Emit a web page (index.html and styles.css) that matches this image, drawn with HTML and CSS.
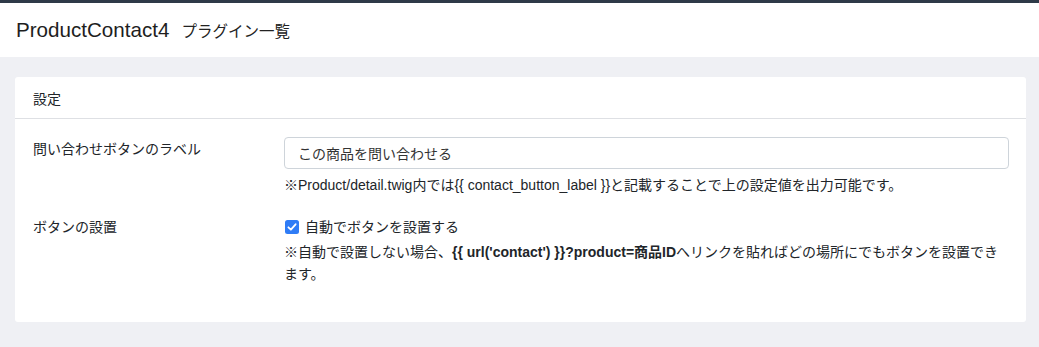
FILE: index.html
```html
<!DOCTYPE html>
<html lang="ja">
<head>
<meta charset="utf-8">
<link rel="stylesheet" href="styles.css">
</head>
<body>
<div class="topbar"></div>
<header class="header">
  <h1 class="title">ProductContact4</h1>
  <span class="subtitle">プラグイン一覧</span>
</header>
<main class="main">
  <section class="card">
    <div class="card-header">設定</div>
    <div class="card-body">
      <div class="row">
        <div class="label">問い合わせボタンのラベル</div>
        <div class="field">
          <input class="input" type="text" value="この商品を問い合わせる">
          <p class="help">※Product/detail.twig内では{{ contact_button_label }}と記載することで上の設定値を出力可能です。</p>
        </div>
      </div>
      <div class="row">
        <div class="label">ボタンの設置</div>
        <div class="field">
          <label class="check"><span class="box"><svg viewBox="0 0 14 14" width="14" height="14"><rect width="14" height="14" rx="2.5" fill="#2f7cf6"/><path d="M3.4 7.3 L5.9 9.7 L10.6 4.3" fill="none" stroke="#fff" stroke-width="1.8" stroke-linecap="round" stroke-linejoin="round"/></svg></span>自動でボタンを設置する</label>
          <p class="help help2">※自動で設置しない場合、<b>{{ url('contact') }}?product=商品ID</b>へリンクを貼ればどの場所にでもボタンを設置できます。</p>
        </div>
      </div>
    </div>
  </section>
</main>
</body>
</html>
```
FILE: styles.css
```css
* { box-sizing: border-box; }
html, body { margin: 0; padding: 0; }
body {
  font-family: "Liberation Sans", "Noto Sans CJK JP", sans-serif;
  color: #212529;
  background: #eff0f4;
  font-size: 14px;
}
.topbar { height: 3px; background: #2e3a48; }
.header {
  background: #fff;
  height: 54px;
  display: flex;
  align-items: center;
  padding: 0 16px;
  gap: 12px;
}
.title {
  margin: 0;
  font-size: 20.6px;
  font-weight: normal;
  color: #1e1e1e;
}
.subtitle { font-size: 15.5px; color: #222; }
.main { padding: 20px 13px 20px 15px; }
.card { background: #fff; border-radius: 3px; }
.card-header {
  height: 42px;
  display: flex;
  align-items: center;
  padding: 0 18px;
  border-bottom: 1px solid #dee0e4;
  font-size: 14px;
}
.card-body { padding: 18px 17px 37px 18px; display: flex; flex-direction: column; gap: 20px; }
.row { display: grid; grid-template-columns: 251px 1fr; }
.label { padding-top: 2px; line-height: 20px; }
.field { display: flex; flex-direction: column; }
.input {
  height: 32px;
  border: 1px solid #ced4da;
  border-radius: 4px;
  padding: 0 13px;
  font: inherit;
  font-size: 14px;
  color: #333;
}
.help { margin: 6px 0 0; line-height: 20px; font-size: 14px; }
.help2 { margin-top: 4px; line-height: 22px; }
.help b { font-weight: bold; }
.check { display: flex; align-items: center; gap: 6px; line-height: 20px; font-size: 14px; padding-top: 2px; }
.box { display: flex; width: 14px; height: 14px; margin-left: 1px; }
```
